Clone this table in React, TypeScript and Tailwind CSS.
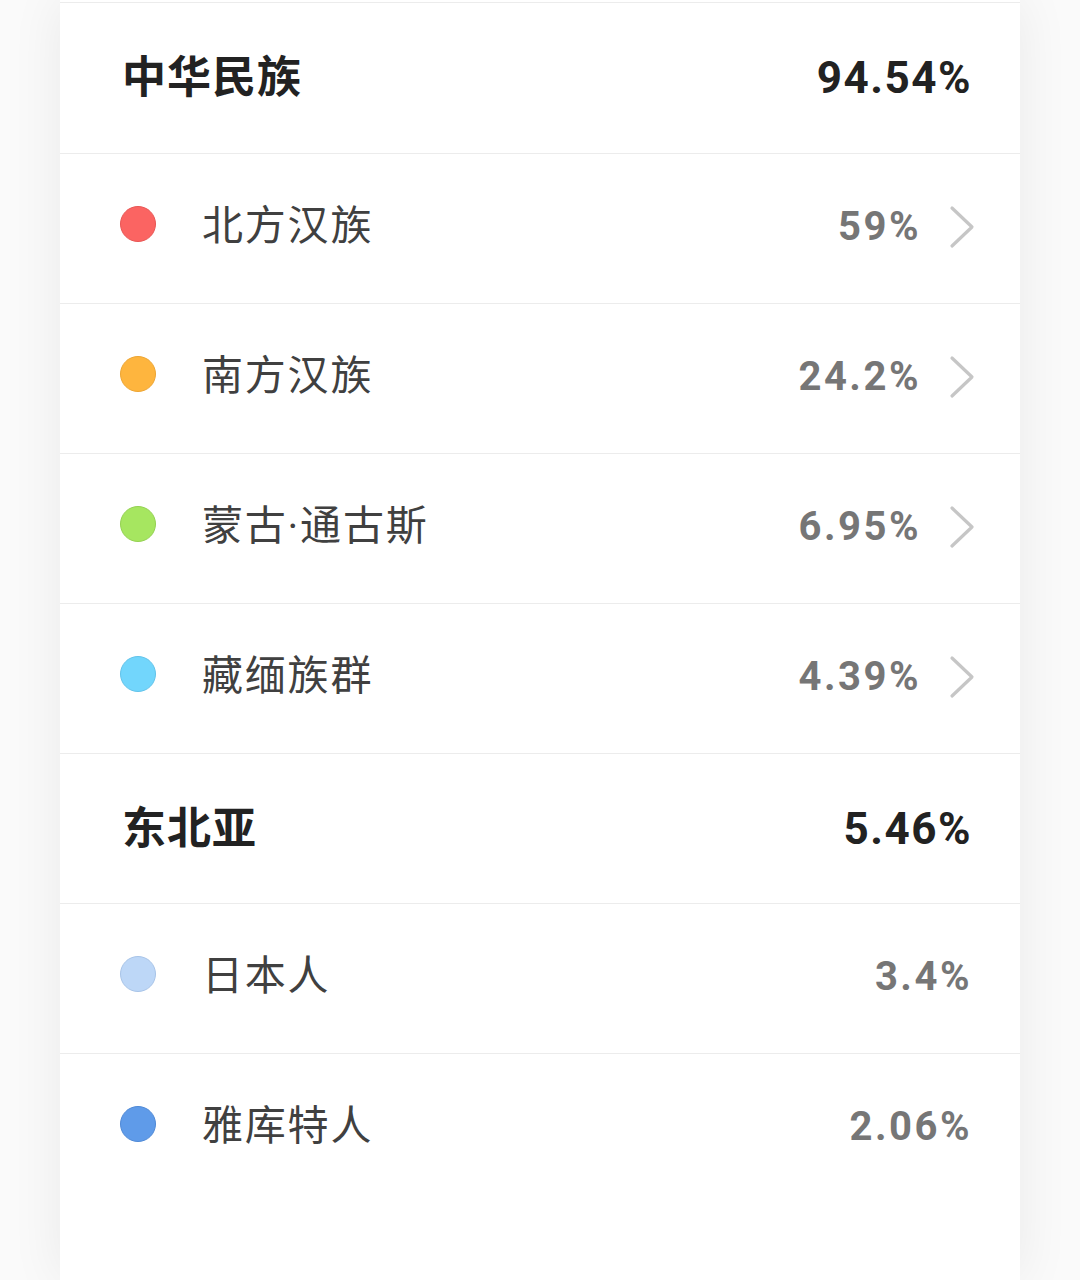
import React from "react";

type Item = {
  label: string;
  value: string;
  color: string;
  ring: string;
  more?: boolean;
};

type Group = {
  title: string;
  value: string;
  items: Item[];
};

const groups: Group[] = [
  {
    title: "中华民族",
    value: "94.54%",
    items: [
      { label: "北方汉族", value: "59%", color: "bg-[#fb6462]", ring: "border-[#e85654]", more: true },
      { label: "南方汉族", value: "24.2%", color: "bg-[#feb53e]", ring: "border-[#eda533]", more: true },
      { label: "蒙古·通古斯", value: "6.95%", color: "bg-[#a6e660]", ring: "border-[#94d152]", more: true },
      { label: "藏缅族群", value: "4.39%", color: "bg-[#72d6fc]", ring: "border-[#62c3ea]", more: true },
    ],
  },
  {
    title: "东北亚",
    value: "5.46%",
    items: [
      { label: "日本人", value: "3.4%", color: "bg-[#bdd7f7]", ring: "border-[#a8c4e8]" },
      { label: "雅库特人", value: "2.06%", color: "bg-[#5f9be9]", ring: "border-[#4f89d6]" },
    ],
  },
];

const Chevron = () => (
  <svg width="28" height="44" viewBox="0 0 28 44" fill="none" className="ml-[27px] mr-[-4px]">
    <path d="M4 3 L24 22 L4 41" stroke="#c6c6c6" strokeWidth="3.2" strokeLinecap="round" strokeLinejoin="round" />
  </svg>
);

const Row = ({ item }: { item: Item }) => (
  <div className="flex h-[150px] items-center border-t border-[#ececec] pb-[4px] pl-[60px] pr-[48px]">
    <span className={`mb-[6px] h-[36px] w-[36px] shrink-0 rounded-full border ${item.color} ${item.ring}`} />
    <span className="ml-[46px] flex-1 text-[41px] tracking-[1.8px] text-[#404040]">{item.label}</span>
    <span className="text-[40px] font-bold tracking-[2.5px] text-[#767676]">{item.value}</span>
    {item.more ? <Chevron /> : null}
  </div>
);

export default function App() {
  return (
    <div
      className="min-h-[1280px] bg-[#fafafa]"
      style={{ fontFamily: 'Roboto, "Noto Sans CJK SC", sans-serif' }}
    >
      <div className="mx-[60px] min-h-[1280px] bg-white pt-[2px] shadow-[0_0_50px_rgba(0,0,0,0.07)]">
        {groups.map((g, gi) => (
          <div key={gi} className={gi === 0 ? "border-t border-[#ececec]" : ""}>
            <div
              className={`flex h-[150px] items-center pl-[62px] pr-[48px] ${
                gi === 0 ? "" : "border-t border-[#ececec]"
              }`}
            >
              <span className="flex-1 text-[44px] font-semibold tracking-[1px] text-[#222]">{g.title}</span>
              <span className="text-[44px] font-bold tracking-[1.5px] text-[#222]">{g.value}</span>
            </div>
            {g.items.map((it, i) => (
              <Row key={i} item={it} />
            ))}
          </div>
        ))}
      </div>
    </div>
  );
}
